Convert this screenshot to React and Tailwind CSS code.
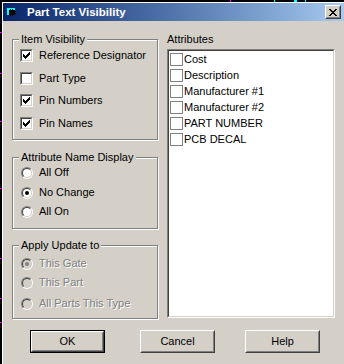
import React from "react";

const FONT = { fontFamily: '"Liberation Sans", Arial, sans-serif' };

function Check({ checked }) {
  return (
    <div className="w-[13px] h-[13px] shrink-0 border border-t-[#808080] border-l-[#808080] border-b-white border-r-white">
      <div className="relative w-full h-full border border-t-[#404040] border-l-[#404040] border-b-[#D4D0C8] border-r-[#D4D0C8] bg-white">
        {checked && (
          <svg className="absolute left-[1px] top-[1px]" width="7" height="7" viewBox="0 0 7 7" shapeRendering="crispEdges">
            <path d="M0 2h1v3H0z M1 3h1v3H1z M2 4h1v3H2z M3 3h1v3H3z M4 2h1v3H4z M5 1h1v3H5z M6 0h1v3H6z" fill="#000" />
          </svg>
        )}
      </div>
    </div>
  );
}

function Radio({ checked, disabled }) {
  return (
    <div className="w-[12px] h-[12px] shrink-0 rounded-full border border-t-[#808080] border-l-[#808080] border-b-white border-r-white">
      <div
        className={
          "w-full h-full rounded-full border border-t-[#404040] border-l-[#404040] border-b-[#D4D0C8] border-r-[#D4D0C8] flex items-center justify-center " +
          (disabled ? "bg-[#D4D0C8]" : "bg-white")
        }
      >
        {checked && (
          <div className={"w-[4px] h-[4px] rounded-full " + (disabled ? "bg-[#808080]" : "bg-black")} />
        )}
      </div>
    </div>
  );
}

function CheckRow({ label, checked, className = "" }) {
  return (
    <div className={"flex items-center h-[13px] " + className}>
      <Check checked={checked} />
      <span className="ml-[6px] leading-[13px]">{label}</span>
    </div>
  );
}

function RadioRow({ label, checked, disabled, className = "" }) {
  return (
    <div className={"flex items-center h-[13px] " + className}>
      <Radio checked={checked} disabled={disabled} />
      <span
        className={"ml-[6px] leading-[13px] " + (disabled ? "text-[#808080] [text-shadow:1px_1px_0_#ffffff]" : "")}
      >
        {label}
      </span>
    </div>
  );
}

function Group({ title, className = "", children }) {
  return (
    <div
      className={
        "relative border border-[#808080] shadow-[inset_1px_1px_0_#ffffff,1px_1px_0_#ffffff] " + className
      }
    >
      <span className="absolute left-[6px] top-[-7px] px-[2px] bg-[#D4D0C8] leading-[13px]">{title}</span>
      {children}
    </div>
  );
}

function Button({ label, isDefault, className = "" }) {
  const inner = (
    <div className="w-full h-full border border-t-white border-l-white border-b-[#404040] border-r-[#404040]">
      <div className="w-full h-full border border-t-[#D4D0C8] border-l-[#D4D0C8] border-b-[#808080] border-r-[#808080] flex items-center justify-center leading-[13px]">
        {label}
      </div>
    </div>
  );
  return (
    <div className={"w-[75px] h-[23px] " + (isDefault ? "border border-black " : "") + className}>
      {inner}
    </div>
  );
}

export default function App() {
  const attrs = ["Cost", "Description", "Manufacturer #1", "Manufacturer #2", "PART NUMBER", "PCB DECAL"];
  return (
    <div className="relative w-[344px] h-[364px] bg-black overflow-hidden text-[11px] text-black" style={FONT}>
      {/* desktop specks */}
      <div className="absolute left-0 top-[32px] w-[2px] h-[1px] bg-[#FF00FF]" />
      <div className="absolute left-0 top-[73px] w-[2px] h-[1px] bg-[#FF00FF]" />
      <div className="absolute left-0 top-[121px] w-[2px] h-[1px] bg-[#FF00FF]" />
      <div className="absolute left-0 top-[188px] w-[2px] h-[1px] bg-[#FF00FF]" />
      <div className="absolute left-0 top-[258px] w-[2px] h-[1px] bg-[#FF00FF]" />
      <div className="absolute left-0 top-[298px] w-[2px] h-[1px] bg-[#FF00FF]" />
      <div className="absolute left-0 top-[322px] w-[2px] h-[1px] bg-[#FF00FF]" />
      <div className="absolute left-[230px] top-0 w-[1px] h-[2px] bg-[#FF00FF]" />
      <div className="absolute left-[274px] top-0 w-[1px] h-[2px] bg-[#00FFFF]" />
      <div className="absolute left-[294px] top-0 w-[3px] h-[2px] bg-[#00FFFF]" />
      <div className="absolute left-[305px] top-0 w-[1px] h-[2px] bg-[#00FFFF]" />

      <div className="ml-[2px] mt-[2px] w-[342px] h-[362px] bg-[#D4D0C8] border-l border-t border-white">
        {/* title bar */}
        <div className="h-[18px] bg-linear-to-r from-[#0A246A] to-[#A6CAF0] flex items-center pl-[4px] pr-[3px]">
          <svg width="9" height="8" viewBox="0 0 9 8" shapeRendering="crispEdges" className="shrink-0">
            <rect x="0" y="0" width="8" height="7" fill="#00FFFF" />
            <rect x="2" y="2" width="6" height="5" fill="#000" />
            <rect x="3" y="1" width="1" height="1" fill="#000" />
            <rect x="5" y="1" width="1" height="1" fill="#000" />
            <rect x="8" y="3" width="1" height="1" fill="#000" />
            <rect x="8" y="5" width="1" height="1" fill="#000" />
            <rect x="3" y="7" width="1" height="1" fill="#000" />
            <rect x="5" y="7" width="1" height="1" fill="#000" />
          </svg>
          <span className="ml-[11px] text-white font-bold text-[11.5px] leading-[14px]">Part Text Visibility</span>
          <div className="ml-auto w-[16px] h-[14px] border border-t-white border-l-white border-b-[#404040] border-r-[#404040]">
            <div className="w-full h-full bg-[#D4D0C8] border border-t-[#D4D0C8] border-l-[#D4D0C8] border-b-[#808080] border-r-[#808080] flex items-center justify-center">
              <svg width="8" height="7" viewBox="0 0 8 7" shapeRendering="crispEdges" className="mr-[1px]">
                <path
                  d="M0 0h2v1H0z M6 0h2v1H6z M1 1h2v1H1z M5 1h2v1H5z M2 2h4v1H2z M3 3h2v1H3z M2 4h4v1H2z M1 5h2v1H1z M5 5h2v1H5z M0 6h2v1H0z M6 6h2v1H6z"
                  fill="#000"
                />
              </svg>
            </div>
          </div>
        </div>

        {/* content */}
        <div className="pl-[9px] pt-[11px]">
          <div className="flex">
            {/* left column */}
            <div className="w-[146px] pt-[7px]">
              <Group title="Item Visibility" className="h-[101px] pl-[7px] pt-[9px]">
                <CheckRow label="Reference Designator" checked />
                <CheckRow label="Part Type" className="mt-[10px]" />
                <CheckRow label="Pin Numbers" checked className="mt-[9px]" />
                <CheckRow label="Pin Names" checked className="mt-[10px]" />
              </Group>
              <Group title="Attribute Name Display" className="mt-[17px] h-[72px] pl-[8px] pt-[8px]">
                <RadioRow label="All Off" />
                <RadioRow label="No Change" checked className="mt-[7px]" />
                <RadioRow label="All On" className="mt-[6px]" />
              </Group>
              <Group title="Apply Update to" className="mt-[16px] h-[74px] pl-[8px] pt-[11px]">
                <RadioRow label="This Gate" checked disabled />
                <RadioRow label="This Part" disabled className="mt-[6px]" />
                <RadioRow label="All Parts This Type" disabled className="mt-[8px]" />
              </Group>
            </div>

            {/* right column */}
            <div className="ml-[9px] w-[168px]">
              <div className="h-[17px] leading-[13px] pt-[1px]">Attributes</div>
              <div className="h-[269px] border border-t-[#808080] border-l-[#808080] border-b-white border-r-white">
                <div className="w-full h-full bg-white border border-t-[#404040] border-l-[#404040] border-b-[#D4D0C8] border-r-[#D4D0C8] pl-[1px]">
                  {attrs.map((a) => (
                    <div key={a} className="h-[16px] flex items-center">
                      <div className="w-[13px] h-[13px] border border-[#808080] bg-white shrink-0" />
                      <span className="ml-[1px] leading-[13px]">{a}</span>
                    </div>
                  ))}
                </div>
              </div>
            </div>
          </div>

          {/* buttons */}
          <div className="flex mt-[11px] pl-[18px]">
            <Button label="OK" isDefault />
            <Button label="Cancel" className="ml-[35px]" />
            <Button label="Help" className="ml-[30px]" />
          </div>
        </div>
      </div>
    </div>
  );
}
